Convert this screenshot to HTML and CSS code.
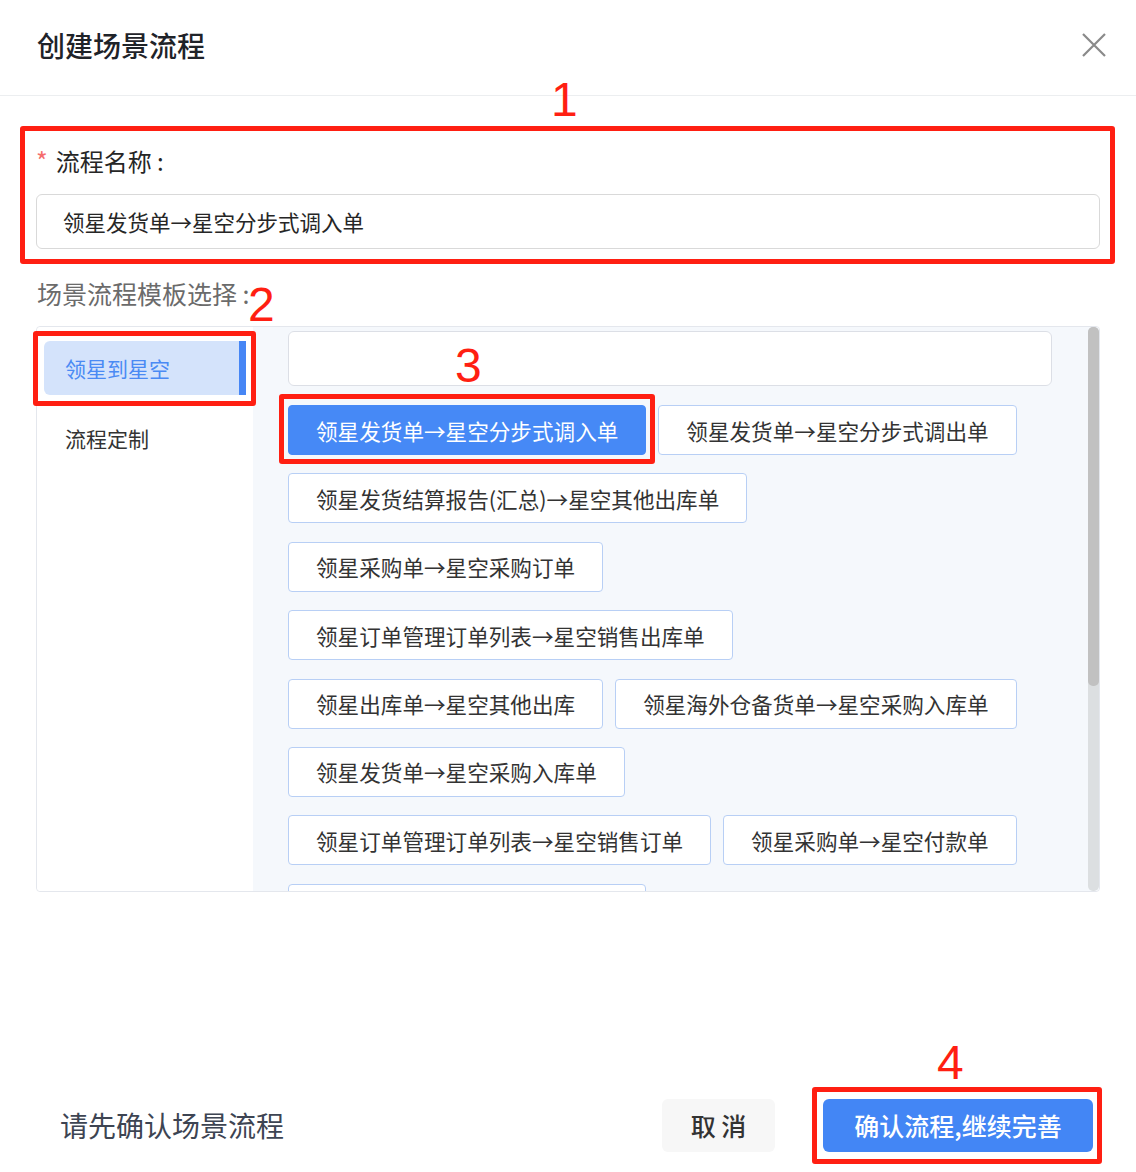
FILE: index.html
```html
<!DOCTYPE html>
<html lang="zh-CN">
<head>
  <meta charset="UTF-8">
  <title>创建场景流程</title>
  <meta name="viewport" content="width=device-width, initial-scale=1.0"/>
  <link rel="stylesheet" href="styles.css">
</head>
<body>
  <div class="dialog">
    <div class="dlg-header">
      <h2>创建场景流程</h2>
      <button class="close" type="button" aria-label="关闭">
        <svg width="24" height="24" viewBox="0 0 24 24"><path d="M1 1 L23 23 M23 1 L1 23" stroke="#8a8a8a" stroke-width="2.2" fill="none"/></svg>
      </button>
    </div>

    <div class="dlg-body">
      <div class="form-item mark mark-1">
        <span class="num num-1">1</span>
        <label class="form-label"><span class="req">*</span>流程名称 :</label>
        <input class="text-input" type="text" value="领星发货单→星空分步式调入单">
      </div>

      <div class="tpl-label">场景流程模板选择 :<span class="num num-2">2</span></div>

      <div class="tpl-panel">
        <ul class="tpl-side">
          <li class="side-item active mark mark-2">领星到星空</li>
          <li class="side-item">流程定制</li>
        </ul>
        <div class="tpl-main">
          <div class="tpl-scroll">
            <div class="search-box"><span class="num num-3">3</span></div>
            <div class="tpl-list">
              <button class="tpl-btn active mark mark-3">领星发货单→星空分步式调入单</button>
              <button class="tpl-btn">领星发货单→星空分步式调出单</button>
              <button class="tpl-btn">领星发货结算报告(汇总)→星空其他出库单</button>
              <button class="tpl-btn">领星采购单→星空采购订单</button>
              <button class="tpl-btn">领星订单管理订单列表→星空销售出库单</button>
              <button class="tpl-btn">领星出库单→星空其他出库</button>
              <button class="tpl-btn">领星海外仓备货单→星空采购入库单</button>
              <button class="tpl-btn">领星发货单→星空采购入库单</button>
              <button class="tpl-btn">领星订单管理订单列表→星空销售订单</button>
              <button class="tpl-btn">领星采购单→星空付款单</button>
              <button class="tpl-btn">领星移除货件→星空其他出库单</button>
            </div>
          </div>
          <div class="scrollbar"><div class="thumb"></div></div>
        </div>
      </div>
    </div>

    <div class="dlg-footer">
      <span class="hint">请先确认场景流程</span>
      <div class="actions">
        <button class="btn btn-cancel" type="button">取 消</button>
        <button class="btn btn-primary mark mark-4" type="button">确认流程,继续完善<span class="num num-4">4</span></button>
      </div>
    </div>
  </div>
</body>
</html>
```

FILE: styles.css
```css
* {
  box-sizing: border-box;
}
body {
  margin: 0;
  font-family: "Noto Sans CJK SC", "Noto Sans", sans-serif;
  background: #fff;
  color: #333;
}
.dialog {
  width: 1136px;
  height: 1172px;
  display: flex;
  flex-direction: column;
}

/* header */
.dlg-header {
  height: 96px;
  flex-shrink: 0;
  border-bottom: 1px solid #eceef0;
  display: flex;
  align-items: center;
  justify-content: space-between;
  padding: 0 30px 6px 37px;
}
.dlg-header h2 {
  margin: 0;
  font-size: 28px;
  font-weight: 500;
  color: #1f2329;
}
.close {
  border: none;
  background: none;
  padding: 0;
  width: 24px;
  height: 24px;
  cursor: pointer;
}

/* body */
.dlg-body {
  padding: 49px 36px 0 36px;
  flex: 1;
}
.form-item {
  display: flex;
  flex-direction: column;
}
.form-label {
  display: flex;
  align-items: center;
  height: 30px;
  font-size: 24px;
  color: #262626;
  margin-bottom: 19px;
}
.req {
  color: #f56c6c;
  margin: 0 8px 0 0;
  font-size: 25px;
  line-height: 1;
}
.text-input {
  height: 55px;
  border: 1px solid #d9d9d9;
  border-radius: 6px;
  padding: 0 26px;
  font-family: inherit;
  font-size: 21.5px;
  color: #262626;
  outline: none;
}
.tpl-label {
  position: relative;
  display: inline-block;
  margin-top: 28px;
  margin-left: 1px;
  font-size: 25px;
  line-height: 32px;
  color: #6b6b6b;
}

/* template panel */
.tpl-panel {
  margin-top: 17px;
  height: 566px;
  border: 1px solid #e4e7ed;
  border-radius: 4px;
  display: flex;
}
.tpl-side {
  list-style: none;
  margin: 0;
  padding: 14px 7px 0 7px;
  width: 216px;
  flex-shrink: 0;
  display: flex;
  flex-direction: column;
  gap: 16px;
  background: #fff;
  border-radius: 4px 0 0 4px;
}
.side-item {
  height: 54px;
  line-height: 54px;
  padding-left: 21px;
  font-size: 21px;
  color: #333;
  border-radius: 6px;
}
.side-item.active {
  background: #d4e3fb;
  color: #4a8af4;
  border-right: 7px solid #4686f5;
  border-radius: 6px 0 0 6px;
}
.tpl-main {
  flex: 1;
  display: flex;
  background: #f5f8fc;
  border-radius: 0 4px 4px 0;
  overflow: hidden;
}
.tpl-scroll {
  flex: 1;
  padding: 4px 36px 0 35px;
  overflow: hidden;
}
.search-box {
  position: relative;
  height: 55px;
  background: #fff;
  border: 1px solid #dcdfe6;
  border-radius: 6px;
}
.tpl-list {
  margin-top: 19px;
  display: flex;
  flex-wrap: wrap;
  gap: 18.4px 12px;
}
.tpl-btn {
  height: 50px;
  padding: 0 27px;
  background: #fff;
  border: 1px solid #b8cff5;
  border-radius: 4px;
  font-family: inherit;
  font-size: 21.6px;
  color: #333;
  cursor: pointer;
}
.tpl-btn.active {
  background: #4689f6;
  border-color: #4689f6;
  color: #fff;
}
.scrollbar {
  width: 11px;
  background: #dcdfe1;
  border-radius: 5px;
}
.thumb {
  height: 359px;
  background: #c1c1c1;
  border-radius: 5px;
}

/* footer */
.dlg-footer {
  height: 94px;
  flex-shrink: 0;
  display: flex;
  align-items: center;
  justify-content: space-between;
  padding: 0 43px 0 60px;
}
.hint {
  font-size: 28px;
  color: #3d4452;
}
.actions {
  display: flex;
  gap: 48px;
}
.btn {
  height: 53px;
  border: none;
  border-radius: 6px;
  font-family: inherit;
  font-size: 25px;
  font-weight: 500;
  cursor: pointer;
}
.btn-cancel {
  width: 113px;
  background: #f7f7f7;
  color: #333;
}
.btn-primary {
  width: 270px;
  background: #4386f5;
  color: #fff;
}

/* annotation marks */
.mark {
  position: relative;
}
.mark::after {
  content: "";
  position: absolute;
  border: 5px solid #ff1f12;
  border-radius: 3px;
  pointer-events: none;
}
.mark-1::after {
  top: -19px;
  bottom: -15px;
  left: -16px;
  right: -15px;
}
.mark-2::after {
  top: -10px;
  bottom: -11px;
  left: -11px;
  right: -17px;
}
.mark-3::after {
  top: -12px;
  bottom: -10px;
  left: -10px;
  right: -10px;
}
.mark-4::after {
  top: -12px;
  bottom: -12px;
  left: -11px;
  right: -9px;
}
.num {
  position: absolute;
  font-family: "Liberation Sans", sans-serif;
  font-size: 48px;
  line-height: 1;
  font-weight: 400;
  color: #ff1f12;
}
.num-1 {
  top: -69px;
  left: 515px;
}
.num-2 {
  top: 4px;
  left: 211px;
}
.num-3 {
  top: 10px;
  left: 166px;
}
.num-4 {
  top: -60px;
  left: 114px;
}
```
